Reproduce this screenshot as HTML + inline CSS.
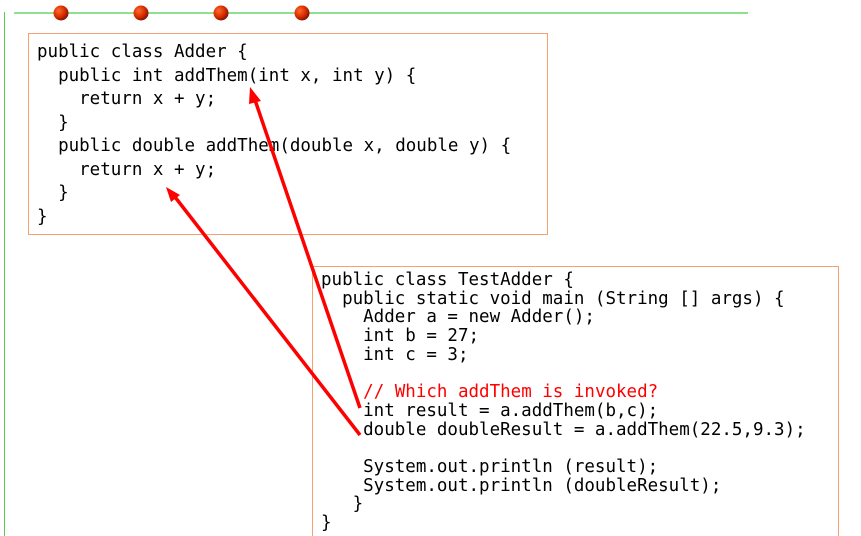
<!DOCTYPE html>
<html><head><meta charset="utf-8"><style>
html,body{margin:0;padding:0;background:#fff;width:861px;height:536px;overflow:hidden;position:relative}
.code{position:absolute;font-family:"DejaVu Sans Mono","Liberation Mono",monospace;font-size:17.5px;color:#000;white-space:pre;border:1px solid #f4a070;box-sizing:border-box;background:#fff}
#a{left:28px;top:33px;width:520px;height:202px;line-height:23.5px;padding:7px 0 0 8px}
#b{left:312px;top:266px;width:527px;height:290px;line-height:18.7px;padding:4px 0 0 8px}
.r{color:#f00}
</style></head><body>
<div style="position:absolute;left:14px;top:12px;width:734px;height:2px;background:#8de38d"></div>
<div style="position:absolute;left:4px;top:12px;width:1px;height:530px;background:#55cc55"></div>
<div class="code" id="a">public class Adder {
  public int addThem(int x, int y) {
    return x + y;
  }
  public double addThem(double x, double y) {
    return x + y;
  }
}</div>
<div class="code" id="b">public class TestAdder {
  public static void main (String [] args) {
    Adder a = new Adder();
    int b = 27;
    int c = 3;

    <span class="r">// Which addThem is invoked?</span>
    int result = a.addThem(b,c);
    double doubleResult = a.addThem(22.5,9.3);

    System.out.println (result);
    System.out.println (doubleResult);
   }
}</div>
<svg width="861" height="536" style="position:absolute;left:0;top:0">
<defs>
<radialGradient id="g" cx="35%" cy="35%" r="70%"><stop offset="0" stop-color="#ff6a2a"/><stop offset="0.6" stop-color="#d92a00"/><stop offset="1" stop-color="#7a1200"/></radialGradient>
</defs>
<circle cx="61" cy="13" r="7.5" fill="url(#g)"/>
<circle cx="141" cy="13" r="7.5" fill="url(#g)"/>
<circle cx="221" cy="13" r="7.5" fill="url(#g)"/>
<circle cx="302" cy="13" r="7.5" fill="url(#g)"/>
<line x1="360" y1="408" x2="255" y2="100" stroke="#f00" stroke-width="3.5"/>
<polygon points="250,87 261,101 249,104" fill="#f00"/>
<line x1="360" y1="435" x2="175" y2="197" stroke="#f00" stroke-width="3.5"/>
<polygon points="166,187 180,195 171,202" fill="#f00"/>
</svg>
</body></html>
